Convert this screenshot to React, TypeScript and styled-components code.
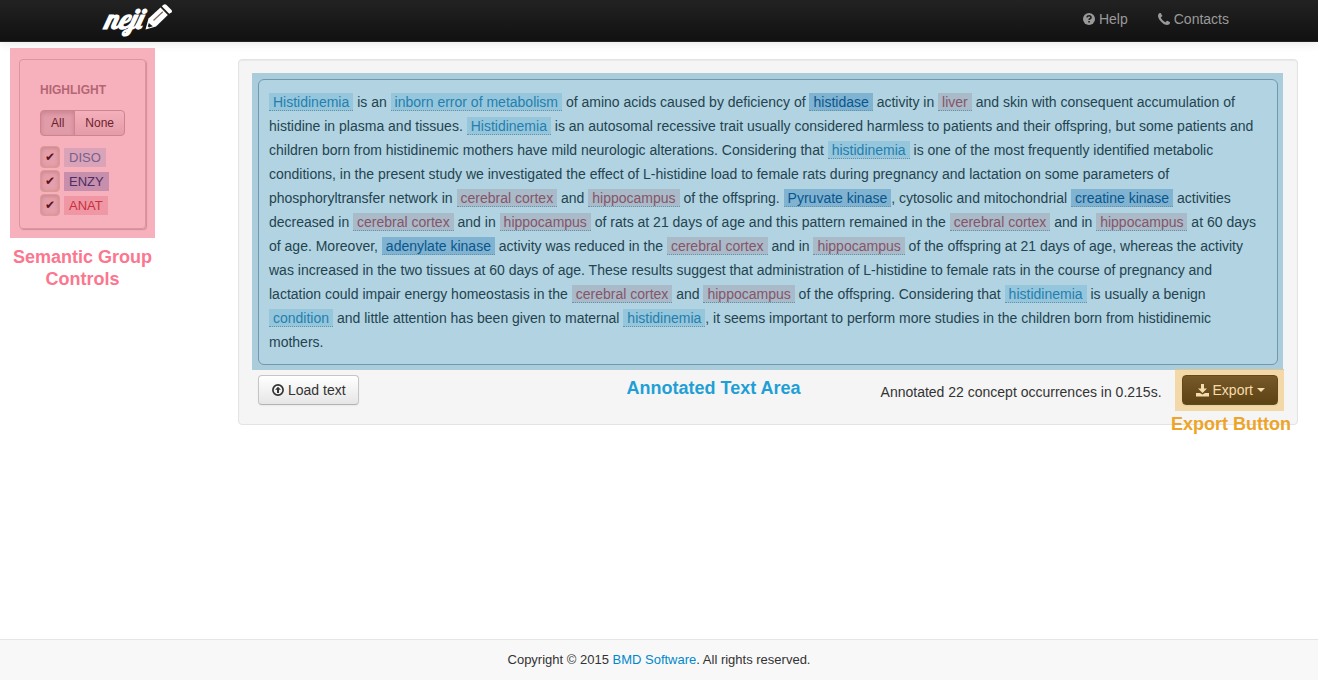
import React, { useState } from "react";
import styled, { createGlobalStyle, css } from "styled-components";

const GlobalStyle = createGlobalStyle`
  *, *::before, *::after { box-sizing: border-box; }
  body {
    margin: 0;
    background: #fff;
    color: #333;
    font: 14px/20px "Liberation Sans", Arial, sans-serif;
  }
  button, input { font-family: inherit; margin: 0; }
`;

const Page = styled.div`
  display: flex;
  flex-direction: column;
  min-height: 100vh;
`;

const Header = styled.header`
  border-bottom: 1px solid #252525;
  background: linear-gradient(#222, #111);
  box-shadow: 0 1px 10px rgba(0, 0, 0, 0.1);
`;

const HeaderInner = styled.div`
  display: flex;
  justify-content: space-between;
  max-width: 1170px;
  height: 41px;
  margin: 0 auto;
`;

const Brand = styled.a`
  display: flex;
  gap: 4px;
  padding-left: 30px;
  color: #fff;
  font: italic bold 28px/38px "Lobster", "Liberation Serif", serif;
  text-decoration: none;
`;

const Pencil = styled.svg`
  width: 28px;
  height: 28px;
  margin-top: 3px;
`;

const Nav = styled.nav`
  display: flex;
`;

const NavLink = styled.a`
  display: flex;
  align-items: center;
  gap: 4px;
  height: 38px;
  padding: 0 15px;
  color: #999;
  text-decoration: none;
`;

const Icon = styled.svg<{ $size?: number }>`
  flex: none;
  width: ${(p) => p.$size ?? 12}px;
  height: ${(p) => p.$size ?? 12}px;
  fill: currentColor;
`;

const Main = styled.main`
  display: flex;
  flex: 1;
  align-items: flex-start;
  gap: 83px;
  padding: 6px 20px 20px 10px;
`;

const Sidebar = styled.aside`
  flex: none;
  width: 145px;
`;

const ControlsRegion = styled.div`
  padding: 11px 9px 9px;
  background: #f6b1bc;
`;

const ControlsBox = styled.section`
  padding: 20px 20px 10px;
  border: 1px solid #de949f;
  border-radius: 4px;
  box-shadow: 1px 1px 1px #d08e98;
`;

const GroupTitle = styled.h2`
  margin: 0 0 10px;
  color: #b56574;
  font-size: 12px;
  line-height: 20px;
  text-transform: uppercase;
`;

const ButtonGroup = styled.div`
  display: flex;
  margin-bottom: 10px;
`;

const ToggleButton = styled.button<{ $active?: boolean }>`
  height: 26px;
  padding: 0 10px;
  border: 1px solid #cd8490;
  background: linear-gradient(#f5b0bb, #e39ca8);
  color: #6d1f2e;
  font-size: 12px;
  line-height: 20px;
  &:first-child { border-radius: 4px 0 0 4px; }
  &:last-child { margin-left: -1px; border-radius: 0 4px 4px 0; }
  ${(p) => p.$active && css`
    background: #e09ca8;
    box-shadow: inset 0 2px 4px rgba(120, 30, 50, 0.2);
  `}
`;

const GroupRow = styled.label`
  display: flex;
  align-items: center;
  gap: 4px;
  height: 22px;
  margin-bottom: 2px;
`;

const Check = styled.input`
  appearance: none;
  display: grid;
  place-items: center;
  width: 20px;
  height: 22px;
  border: 1px solid #d99b92;
  border-radius: 4px;
  background: #e6a0ab;
  box-shadow: inset 0 1px 4px rgba(120, 30, 50, 0.25);
  color: #5c1420;
  font: 12px/20px "DejaVu Sans", sans-serif;
  &:checked::before { content: "✔"; }
`;

type Kind = "diso" | "enzy" | "anat";

const tagColors: Record<Kind, string> = {
  diso: "background: #dba3b7; color: #75608f;",
  enzy: "background: #c78fab; color: #4b2e66;",
  anat: "background: #ef97a4; color: #c9303f;",
};

const GroupTag = styled.span<{ $kind: Kind }>`
  padding: 0 5px;
  font-size: 13px;
  line-height: 19px;
  ${(p) => tagColors[p.$kind]}
`;

const Caption = styled.strong<{ $color: string }>`
  color: ${(p) => p.$color};
  font-size: 18px;
  line-height: 22px;
  text-align: center;
`;

const SidebarCaption = styled(Caption)`
  display: block;
  margin-top: 8px;
`;

const TextCaption = styled(Caption)`
  margin-left: auto;
  padding: 2px 80px 0 0;
`;

const Well = styled.section`
  flex: 1;
  min-width: 0;
  margin-top: 11px;
  padding: 13px 14px 19px 13px;
  border: 1px solid #e3e3e3;
  border-radius: 4px;
  background: #f5f5f5;
  box-shadow: inset 0 1px 1px rgba(0, 0, 0, 0.05);
`;

const TextRegion = styled.div`
  padding: 6px 5px 5px 6px;
  background: #aaccdb;
`;

const AnnotatedText = styled.p`
  margin: 0;
  padding: 10px;
  border: 1px solid #7099b0;
  border-radius: 6px;
  background: #b1d3e2;
  color: #24434f;
  line-height: 24px;
`;

const markColors: Record<Kind, string> = {
  diso: "background: #96c6dc; color: #247fae;",
  enzy: "background: #80b2d1; color: #09568c;",
  anat: "background: #a9bac9; color: #875468;",
};

const Mark = styled.mark<{ $kind: Kind }>`
  padding: 1px 4px 0;
  border-bottom: 1px dotted #6592a8;
  ${(p) => markColors[p.$kind]}
`;

const Toolbar = styled.div`
  display: flex;
  align-items: flex-start;
  padding: 5px 5px 0 6px;
`;

const Button = styled.button<{ $export?: boolean }>`
  display: flex;
  align-items: center;
  gap: 4px;
  height: 30px;
  padding: 0 12px 0 13px;
  border: 1px solid #c5c5c5;
  border-bottom-color: #b3b3b3;
  border-radius: 4px;
  background: linear-gradient(#fff, #e6e6e6);
  box-shadow: 0 1px 2px rgba(0, 0, 0, 0.05);
  color: #333;
  font-size: 14px;
  line-height: 20px;
  ${(p) => p.$export && css`
    position: relative;
    border-color: #65491a;
    background: linear-gradient(#77592a, #5d4213);
    color: #f6dcab;
  `}
`;

const Caret = styled.span`
  border: 4px solid transparent;
  border-top-color: currentColor;
  border-bottom: 0;
`;

const Status = styled.div`
  display: flex;
  gap: 20px;
`;

const StatusText = styled.span`
  padding-top: 7px;
`;

const ExportRegion = styled.div`
  position: relative;
  &::before {
    content: "";
    position: absolute;
    inset: -6px -6px -6px -7px;
    background: #f3d9a8;
    border-top: 1px solid #d5c79f;
  }
`;

const ExportCaption = styled(Caption)`
  position: absolute;
  top: 38px;
  right: -13px;
  white-space: nowrap;
`;

const Footer = styled.footer`
  height: 41px;
  border-top: 1px solid #e5e5e5;
  background: #f8f8f8;
  font-size: 13px;
  line-height: 40px;
  text-align: center;
  a { color: #0088cc; text-decoration: none; }
`;

type Part = string | [Kind, string];

const abstract: Part[] = [
  ["diso", "Histidinemia"], " is an ", ["diso", "inborn error of metabolism"],
  " of amino acids caused by deficiency of ", ["enzy", "histidase"], " activity in ",
  ["anat", "liver"],
  " and skin with consequent accumulation of histidine in plasma and tissues. ",
  ["diso", "Histidinemia"],
  " is an autosomal recessive trait usually considered harmless to patients and their offspring, but some patients and children born from histidinemic mothers have mild neurologic alterations. Considering that ",
  ["diso", "histidinemia"],
  " is one of the most frequently identified metabolic conditions, in the present study we investigated the effect of L-histidine load to female rats during pregnancy and lactation on some parameters of phosphoryltransfer network in ",
  ["anat", "cerebral cortex"], " and ", ["anat", "hippocampus"], " of the offspring. ",
  ["enzy", "Pyruvate kinase"], ", cytosolic and mitochondrial ", ["enzy", "creatine kinase"],
  " activities decreased in ", ["anat", "cerebral cortex"], " and in ", ["anat", "hippocampus"],
  " of rats at 21 days of age and this pattern remained in the ",
  ["anat", "cerebral cortex"], " and in ", ["anat", "hippocampus"],
  " at 60 days of age. Moreover, ", ["enzy", "adenylate kinase"],
  " activity was reduced in the ", ["anat", "cerebral cortex"], " and in ",
  ["anat", "hippocampus"],
  " of the offspring at 21 days of age, whereas the activity was increased in the two tissues at 60 days of age. These results suggest that administration of L-histidine to female rats in the course of pregnancy and lactation could impair energy homeostasis in the ",
  ["anat", "cerebral cortex"], " and ", ["anat", "hippocampus"],
  " of the offspring. Considering that ", ["diso", "histidinemia"],
  " is usually a benign ", ["diso", "condition"],
  " and little attention has been given to maternal ", ["diso", "histidinemia"],
  ", it seems important to perform more studies in the children born from histidinemic mothers.",
];

const kinds: Kind[] = ["diso", "enzy", "anat"];

export default function App() {
  const [shown, setShown] = useState<Kind[]>(kinds);
  const toggle = (kind: Kind) =>
    setShown((s) => (s.includes(kind) ? s.filter((k) => k !== kind) : [...s, kind]));

  return (
    <Page>
      <GlobalStyle />
      <Header>
        <HeaderInner>
          <Brand href="#">
            neji
            <Pencil viewBox="0 0 28 28" aria-hidden="true">
              <path d="M0.500 26.500 3.500 15.500 15.500 4.500 22.800 12 11 23.500Z" fill="#fff" />
              <path d="M16.800 3.300 18.500 1.800Q20 0.500 21.500 2L26.500 7Q27.700 8.300 26.500 9.500L24.200 10.800Z" fill="#fff" />
              <path d="M8.500 17.500 17.800 8.800" stroke="#7b6a5c" strokeWidth="1.200" />
              <path d="M3.800 20 7.800 23.300 4 24.500 2.800 23.300Z" fill="#1b1b1b" />
            </Pencil>
          </Brand>
          <Nav>
            <NavLink href="#help">
              <Icon viewBox="0 0 12 12" aria-hidden="true">
                <circle cx="6" cy="6" r="6" />
                <path d="M3.900 4.400Q4.200 2.700 6.100 2.700T8 4.400Q8 5.300 7 5.800 6.100 6.200 6.100 7.100" fill="none" stroke="#1c1c1c" strokeWidth="1.600" />
                <path d="M5.200 7.900h1.700v1.600H5.200z" fill="#1c1c1c" />
              </Icon>
              Help
            </NavLink>
            <NavLink href="#contacts">
              <Icon viewBox="192 128 1408 1408" aria-hidden="true">
                <path d="M1600 1240q0 27-10 70.500t-21 68.500q-21 50-122 106-94 51-186 51-27 0-52.500-3.500t-57.500-12.500-47.500-14.500-55.500-20.500-49-18q-98-35-175-83-128-79-264.500-215.500t-215.500-264.500q-48-77-83-175-3-9-18-49t-20.500-55.500-14.500-47.500-12.500-57.500-3.500-52.500q0-92 51-186 56-101 106-122 25-11 68.500-21t70.500-10q14 0 21 3 18 6 53 76 11 19 30 54t35 63.500 31 53.500q3 4 17.500 25t21.500 35.500 7 28.500q0 20-28.500 50t-62 55-62 53-28.500 46q0 9 5 22.500t8.500 20.500 14 24 11.500 19q76 137 174 235t235 174q2 1 19 11.500t24 14 20.500 8.500 22.500 5q18 0 46-28.500t53-62 55-62 50-28.500q14 0 28.500 7t35.500 21.500 25 17.500q25 15 53.500 31t63.500 35 54 30q70 35 76 53 3 7 3 21z" />
              </Icon>
              Contacts
            </NavLink>
          </Nav>
        </HeaderInner>
      </Header>

      <Main>
        <Sidebar>
          <ControlsRegion>
            <ControlsBox>
              <GroupTitle>Highlight</GroupTitle>
              <ButtonGroup>
                <ToggleButton type="button" $active={shown.length === 3} onClick={() => setShown(kinds)}>
                  All
                </ToggleButton>
                <ToggleButton type="button" $active={shown.length === 0} onClick={() => setShown([])}>
                  None
                </ToggleButton>
              </ButtonGroup>
              {kinds.map((kind) => (
                <GroupRow key={kind}>
                  <Check type="checkbox" checked={shown.includes(kind)} onChange={() => toggle(kind)} />
                  <GroupTag $kind={kind}>{kind.toUpperCase()}</GroupTag>
                </GroupRow>
              ))}
            </ControlsBox>
          </ControlsRegion>
          <SidebarCaption $color="#fb768e">Semantic Group Controls</SidebarCaption>
        </Sidebar>

        <Well>
          <TextRegion>
            <AnnotatedText>
              {abstract.map((part, i) =>
                typeof part === "string" || !shown.includes(part[0]) ? (
                  <React.Fragment key={i}>{typeof part === "string" ? part : part[1]}</React.Fragment>
                ) : (
                  <Mark key={i} $kind={part[0]}>{part[1]}</Mark>
                )
              )}
            </AnnotatedText>
          </TextRegion>
          <Toolbar>
            <Button type="button">
              <Icon viewBox="0 0 12 12" aria-hidden="true">
                <circle cx="6" cy="6" r="5.100" fill="none" stroke="currentColor" strokeWidth="1.700" />
                <path d="M6 2.700 8.900 5.800H7V9H5V5.800H3.100Z" />
              </Icon>
              Load text
            </Button>
            <TextCaption $color="#1f9fd6">Annotated Text Area</TextCaption>
            <Status>
              <StatusText>Annotated 22 concept occurrences in 0.215s.</StatusText>
              <ExportRegion>
                <Button type="button" $export>
                  <Icon $size={13} viewBox="0 0 13 13" aria-hidden="true">
                    <path d="M5 0H8V4.500H11L6.500 9 2 4.500H5Z" />
                    <path d="M0 9H4L6.500 10.500 9 9H13V12.500H0Z" />
                  </Icon>
                  Export
                  <Caret />
                </Button>
                <ExportCaption $color="#eda428">Export Button</ExportCaption>
              </ExportRegion>
            </Status>
          </Toolbar>
        </Well>
      </Main>

      <Footer>
        Copyright © 2015 <a href="#bmd">BMD Software</a>. All rights reserved.
      </Footer>
    </Page>
  );
}
